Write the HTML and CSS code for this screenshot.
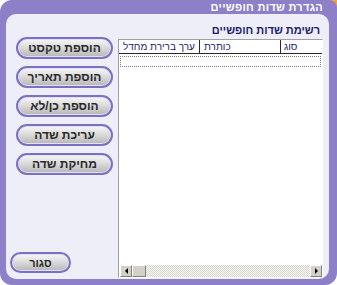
FILE: index.html
```html
<!DOCTYPE html>
<html lang="he">
<head>
  <meta charset="UTF-8" />
  <title>הגדרת שדות חופשיים</title>
  <link rel="stylesheet" href="styles.css">
</head>
<body>

<div class="window">
  <div class="titlebar">הגדרת שדות חופשיים</div>

  <div class="panel">
    <!-- action buttons -->
    <div class="actions">
      <button class="pill">הוספת טקסט</button>
      <button class="pill">הוספת תאריך</button>
      <button class="pill">הוספת כן/לא</button>
      <button class="pill">עריכת שדה</button>
      <button class="pill">מחיקת שדה</button>
      <button class="pill close">סגור</button>
    </div>

    <!-- fields list -->
    <div class="fields">
      <h2>רשימת שדות חופשיים</h2>
      <div class="listview">
        <div class="lv-head">
          <span class="col-type">סוג</span>
          <span class="col-title">כותרת</span>
          <span class="col-default">ערך ברירת מחדל</span>
        </div>
        <div class="lv-body">
          <div class="focus-row"></div>
        </div>
        <div class="hscroll">
          <span class="sb-btn sb-left"></span>
          <span class="sb-thumb"></span>
          <span class="sb-track"></span>
          <span class="sb-btn sb-right"></span>
        </div>
      </div>
    </div>
  </div>
</div>

</body>
</html>
```

FILE: styles.css
```css
:root {
  --frame: #8d80c8;
  --panel: #eeeef9;
  --pill-border: #7c70c2;
  --navy: #1c1c6c;
  --face: #d4d0c8;
}

* {
  box-sizing: border-box;
  margin: 0;
  padding: 0;
  font-family: "Liberation Sans", "DejaVu Sans", sans-serif;
}

body {
  width: 337px;
  height: 285px;
  /* orange corner peeking behind the window */
  background: linear-gradient(#f1a23a, #f1a23a) no-repeat right top / 9px 9px, #fff;
}

.window {
  width: 337px;
  height: 285px;
  background: var(--frame);
  border-radius: 12px 8px 12px 12px;
  padding: 0 8px 6px 6px;
  display: flex;
  flex-direction: column;
}

.titlebar {
  height: 14px;
  line-height: 15px;
  color: #fff;
  font-size: 11px;
  font-weight: bold;
  letter-spacing: 0.3px;
  direction: rtl;
  padding-right: 6px;
}

.panel {
  flex: 1;
  background: var(--panel);
  border-radius: 10px;
  display: flex;
  padding: 0 6px 1px 4px;
}

/* left column */
.actions {
  width: 103px;
  display: flex;
  flex-direction: column;
  gap: 7px;
  padding: 23px 0 5px;
}

.pill {
  display: block;
  width: 97px;
  height: 22px;
  margin-left: 6px;
  border: 2px solid var(--pill-border);
  border-radius: 11px;
  background: linear-gradient(#f7f7f7, #dcdcdc 45%, #b6b6b6);
  box-shadow: inset 0 0 0 1px #e2def4;
  color: #2a2a2a;
  font-size: 12px;
  font-weight: bold;
  direction: rtl;
  cursor: pointer;
}

.pill.close {
  width: 61px;
  height: 21px;
  margin-left: 0;
  margin-top: auto;
  font-size: 11px;
}

/* right column */
.fields {
  width: 205px;
  margin-left: 5px;
  display: flex;
  flex-direction: column;
}

.fields h2 {
  font-size: 11px;
  font-weight: bold;
  color: var(--navy);
  direction: rtl;
  line-height: 13px;
  padding-right: 3px;
  margin: 10px 0 2px;
}

.listview {
  flex: 1;
  background: #fff;
  border: 1px solid;
  border-color: #a0a0a0 #fff #fff #a0a0a0;
  display: flex;
  flex-direction: column;
}

.lv-head {
  display: flex;
  direction: rtl;
  height: 14px;
  border-bottom: 1px solid #2a2a2a;
  font-size: 10px;
  line-height: 13px;
  color: var(--navy);
}

.lv-head span {
  text-align: left;
  padding-left: 3px;
  border-left: 1px solid #2a2a2a;
  white-space: nowrap;
  overflow: hidden;
}

.lv-head .col-type { width: 42px; }
.lv-head .col-title { width: 81px; padding-left: 4px; }
.lv-head .col-default { flex: 1; border-left: none; padding-left: 4px; }

.lv-body {
  flex: 1;
  padding: 2px 1px 0 1px;
}

.focus-row {
  height: 11px;
  border: 1px dotted #808080;
}

/* horizontal scrollbar */
.hscroll {
  display: flex;
  height: 12px;
  margin-left: 1px;
}

.sb-btn, .sb-thumb {
  background: var(--face);
  border: 1px solid;
  border-color: #fff #808080 #808080 #fff;
  display: flex;
  align-items: center;
  justify-content: center;
}

.sb-btn { width: 12px; }
.sb-thumb { width: 14px; }

.sb-track {
  flex: 1;
  background: repeating-conic-gradient(#d4d0c8 0 25%, #fff 0 50%) 0 0 / 2px 2px;
}

.sb-left::before, .sb-right::before {
  content: "";
  border-top: 3px solid transparent;
  border-bottom: 3px solid transparent;
}

.sb-left::before { border-right: 3px solid #000; }
.sb-right::before { border-left: 3px solid #000; }
```
